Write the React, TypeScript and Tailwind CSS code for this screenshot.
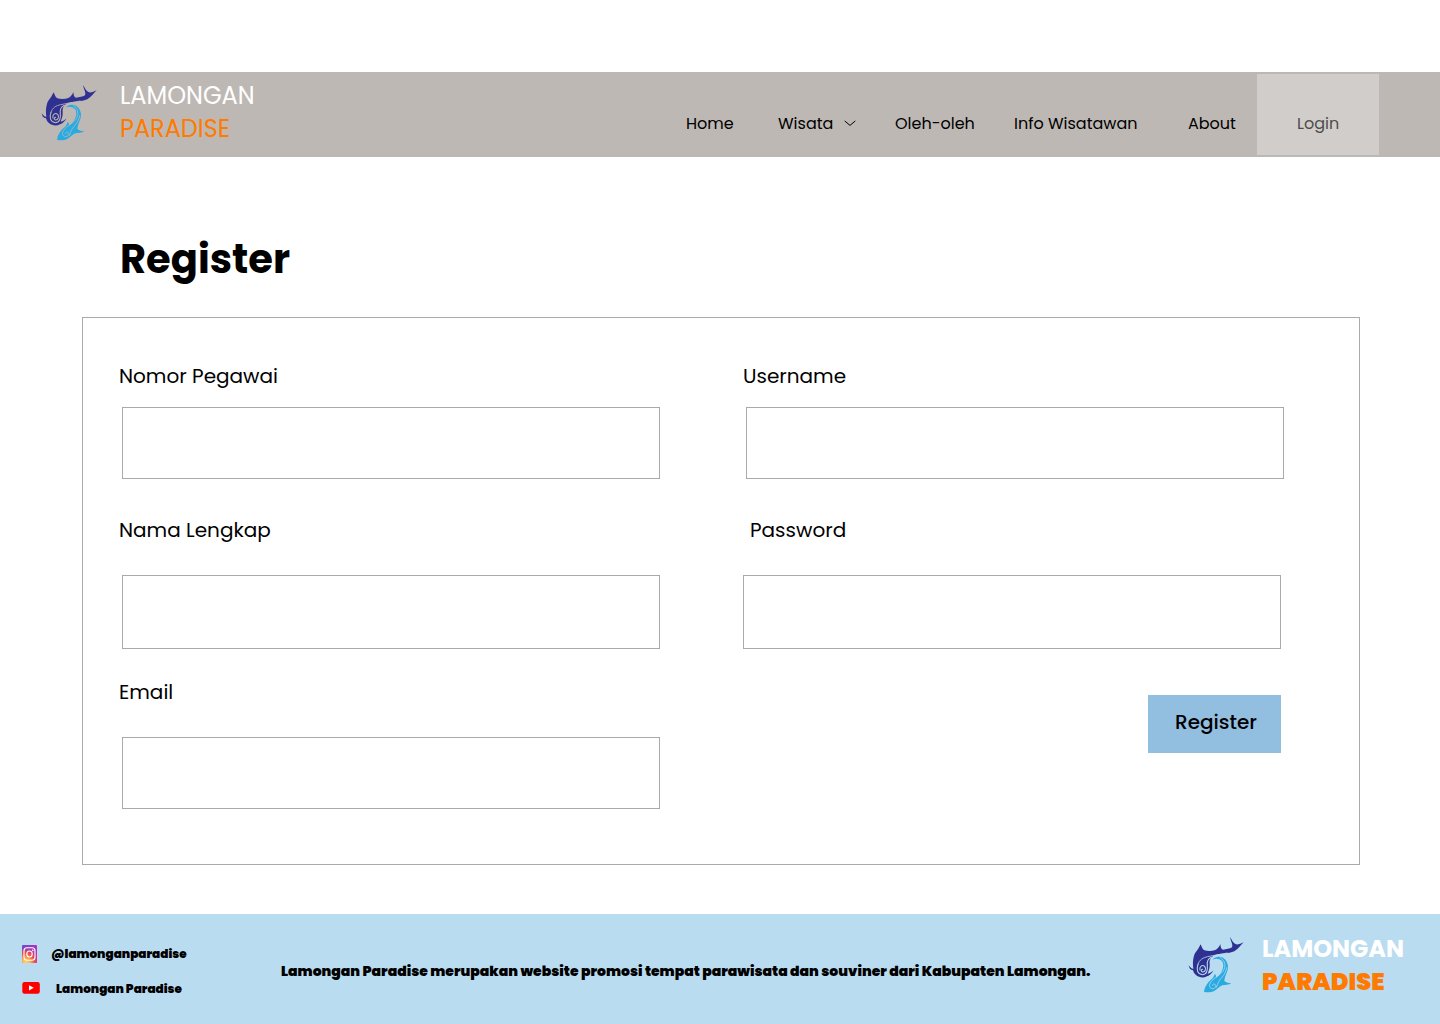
import React from "react";

function Logo({ className }: { className: string }) {
  return (
    <svg className={`size-[58px] shrink-0 ${className}`} viewBox="30 36 174 174" fill="none" strokeLinecap="round">
      <path
        fill="#2e3192"
        d="M35 124C41 132 45 135 49 134C46 116 49 98 54 88C62 78 66 70 71 61C75 70 76 76 82 79C94 82 106 81 115 78C122 74 127 69 130 60C131 70 132 75 138 77C148 76 158 74 165 70C169 62 161 52 159 39C166 50 169 58 177 61C184 62 192 59 200 55C191 64 184 75 172 82C155 90 128 87 112 94C101 100 97 108 98 120C99 132 95 140 92 149C99 148 104 144 110 139C105 148 98 155 90 157C80 163 66 161 58 154C52 150 50 145 48 139C40 138 36 132 35 124Z"
      />
      <g stroke="currentColor">
        <path strokeWidth="2.4" d="M63 121C67 107 78 101 92 98C110 94 128 92 150 87" />
        <path strokeWidth="3.2" d="M63 121C57 137 62 151 76 152C90 152 92 138 91 126C89 113 94 104 103 100" />
        <path strokeWidth="3.2" d="M69 138C66 128 76 121 83 127C89 135 84 145 76 144C71 142 72 136 77 136" />
      </g>
      <path
        fill="#29abe2"
        d="M107 107C113 99 122 97 132 99C145 103 153 115 153 129C153 144 144 153 142 171C148 176 155 177 163 178C155 183 145 182 136 184C125 189 118 201 103 204C95 205 88 205 81 204C82 190 90 178 101 168C107 162 112 157 113 149C117 153 118 157 118 161C128 153 135 144 138 132C141 119 137 109 126 106C120 103 113 104 107 107Z"
      />
      <g stroke="currentColor" strokeWidth="2.2">
        <path d="M130 101C145 110 148 126 138 142C127 156 104 164 98 181C95 193 108 198 115 190C120 181 109 176 106 184" />
        <path d="M149 131C146 153 132 160 125 173C123 179 120 184 118 190" />
      </g>
    </svg>
  );
}

function InstagramIcon() {
  return (
    <svg className="h-[18px] w-[15px]" viewBox="0 0 15 18" fill="none">
      <defs>
        <linearGradient id="igBase" x1="0" y1="0" x2="1" y2="0">
          <stop stopColor="#5b51d8" />
          <stop offset="1" stopColor="#b52fc0" />
        </linearGradient>
        <radialGradient id="igGlow" cx=".25" cy="1.05" r="1">
          <stop stopColor="#ffdc6b" />
          <stop offset=".3" stopColor="#fdb34f" />
          <stop offset=".6" stopColor="#f2504b" />
          <stop offset="1" stopColor="#d8327d" stopOpacity="0" />
        </radialGradient>
      </defs>
      <rect width="15" height="18" rx="1" fill="url(#igBase)" />
      <rect width="15" height="18" rx="1" fill="url(#igGlow)" />
      <rect x="2" y="2.7" width="11" height="12.6" rx="3" stroke="#fff" strokeWidth="1.1" />
      <ellipse cx="7.5" cy="9" rx="2.7" ry="3" stroke="#fff" strokeWidth="1.1" />
      <circle cx="10.8" cy="5.4" r=".8" fill="#fff" />
    </svg>
  );
}

function YoutubeIcon() {
  return (
    <svg className="h-3 w-[18px]" viewBox="0 0 18 12">
      <rect x=".3" width="17.5" height="11.8" rx="2.2" fill="#f00" />
      <path d="M7 3.2v5.2L11.8 5.8z" fill="#fff" />
    </svg>
  );
}

function Field({ label, id, className = "", labelClass = "", inputClass, type = "text" }: {
  label: string;
  id: string;
  className?: string;
  labelClass?: string;
  inputClass: string;
  type?: string;
}) {
  return (
    <div className={`flex flex-col ${className}`}>
      <label htmlFor={id} className={`self-start text-xl leading-[30px] ${labelClass}`}>{label}</label>
      <input id={id} type={type} className={`w-[538px] border border-[#aea9a9] bg-white px-4 outline-none ${inputClass}`} />
    </div>
  );
}

export default function App() {
  return (
    <div className="flex h-[1024px] w-[1440px] flex-col overflow-hidden bg-white pt-[72px] font-['Poppins','Inter',sans-serif] text-black">
      <header className="flex h-[85px] shrink-0 bg-[#beb8b4] pl-10">
        <Logo className="mt-3 text-[#beb8b4]" />
        <div className="ml-[22px] mt-[7px] w-[566px] text-2xl leading-[33px]">
          <div className="text-white">LAMONGAN</div>
          <div className="text-[#ff7a00]">PARADISE</div>
        </div>
        <nav className="flex text-base leading-6">
          <a className="mt-10 w-[92px]">Home</a>
          <a className="mt-10 flex w-[117px]">
            Wisata
            <svg className="ml-[11px] mt-2 h-[7px] w-3" viewBox="0 0 12 7" fill="none">
              <path d="M1 1.2 6 5.4 11 1.2" stroke="#000" strokeLinecap="round" strokeLinejoin="round" />
            </svg>
          </a>
          <a className="mt-10 w-[119px]">Oleh-oleh</a>
          <a className="mt-10 w-[174px]">Info Wisatawan</a>
          <a className="mt-10 w-[69px]">About</a>
          <a className="mt-0.5 h-[81px] w-[122px] bg-[#d1cdca] pl-10 pt-[38px] text-[#4d4d4d]">Login</a>
        </nav>
      </header>

      <main className="flex h-[757px] shrink-0 flex-col pl-[82px] pt-[72px]">
        <h1 className="ml-[38px] text-[40px] font-bold leading-[60px]">Register</h1>
        <form className="mt-7 flex h-[548px] w-[1278px] border border-[#aea9a9] pl-9 pt-[43px]">
          <div className="flex w-[624px] flex-col">
            <Field id="nomor" label="Nomor Pegawai" className="h-[154px]" inputClass="ml-[3px] mt-4 h-[72px]" />
            <Field id="nama" label="Nama Lengkap" className="h-[162px]" inputClass="ml-[3px] mt-[30px] h-[74px]" />
            <Field id="email" label="Email" type="email" inputClass="ml-[3px] mt-[30px] h-[72px]" />
          </div>
          <div className="flex flex-col">
            <Field id="username" label="Username" className="h-[154px]" inputClass="ml-[3px] mt-4 h-[72px]" />
            <Field id="password" label="Password" type="password" className="h-[180px]" labelClass="ml-[7px]" inputClass="mt-[30px] h-[74px]" />
            <button type="button" className="ml-[405px] flex h-[58px] w-[133px] bg-[#92bee0] pl-[27px] pt-3 text-xl font-medium leading-[30px]">
              Register
            </button>
          </div>
        </form>
      </main>

      <footer className="flex h-[110px] shrink-0 bg-[#badcf0] pl-[22px]">
        <div className="flex w-[259px] flex-col pt-[31px] text-xs font-black leading-[18px]">
          <div className="flex h-[35px]">
            <InstagramIcon />
            <span className="ml-3.5">@lamonganparadise</span>
          </div>
          <div className="flex">
            <div className="mt-[2px]">
              <YoutubeIcon />
            </div>
            <span className="ml-4">Lamongan Paradise</span>
          </div>
        </div>
        <p className="mt-[47px] w-[906px] whitespace-nowrap text-sm font-black leading-[21px]">
          Lamongan Paradise merupakan website promosi tempat parawisata dan souviner dari Kabupaten Lamongan.
        </p>
        <Logo className="mt-[22px] text-[#badcf0]" />
        <div className="ml-[17px] mt-[18px] text-2xl leading-[33px]">
          <div className="font-bold text-white">LAMONGAN</div>
          <div className="font-black text-[#ff7a00]">PARADISE</div>
        </div>
      </footer>
    </div>
  );
}
